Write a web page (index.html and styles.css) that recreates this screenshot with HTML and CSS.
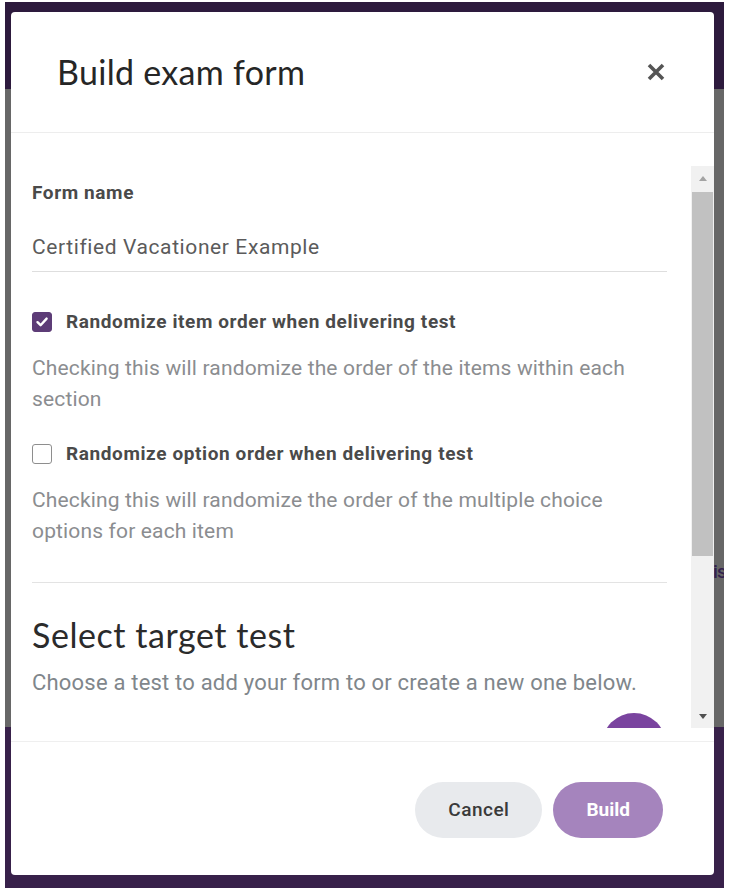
FILE: index.html
```html
<!DOCTYPE html>
<html lang="en">
<head>
<meta charset="utf-8">
<title>Build exam form</title>
<link rel="stylesheet" href="styles.css">
</head>
<body>
<div class="page">
  <div class="bg-top"></div>
  <div class="bg-mid"><span class="bg-word">is</span></div>
  <div class="bg-bottom"></div>

  <div class="modal">
    <header class="modal-header">
      <h1 class="modal-title">Build exam form</h1>
      <button class="close-btn" aria-label="Close">
        <svg width="20" height="20" viewBox="0 0 20 20"><path d="M3 3 L17 17 M17 3 L3 17" stroke="#555" stroke-width="3.6" stroke-linecap="butt" fill="none"/></svg>
      </button>
    </header>

    <div class="modal-body">
      <div class="scroll">
        <div class="scroll-content">
          <div class="field-label">Form name</div>
          <div class="text-input">Certified Vacationer Example</div>

          <div class="check-row">
            <span class="checkbox checked">
              <svg width="14" height="14" viewBox="0 0 14 14"><path d="M2.5 7.2 L5.6 10.2 L11.6 3.6" stroke="#fff" stroke-width="2.4" fill="none" stroke-linecap="round" stroke-linejoin="round"/></svg>
            </span>
            <span class="check-label">Randomize item order when delivering test</span>
          </div>
          <p class="help">Checking this will randomize the order of the items within each section</p>

          <div class="check-row second">
            <span class="checkbox"></span>
            <span class="check-label">Randomize option order when delivering test</span>
          </div>
          <p class="help">Checking this will randomize the order of the multiple choice options for each item</p>

          <hr class="divider">

          <h2 class="section-title">Select target test</h2>
          <p class="section-sub">Choose a test to add your form to or create a new one below.</p>
          <div class="fab-row"><span class="fab"></span></div>
        </div>
        <div class="scrollbar">
          <div class="sb-btn"><span class="tri-up"></span></div>
          <div class="sb-track"><div class="sb-thumb"></div></div>
          <div class="sb-btn"><span class="tri-down"></span></div>
        </div>
      </div>
    </div>

    <footer class="modal-footer">
      <button class="btn btn-cancel">Cancel</button>
      <button class="btn btn-build">Build</button>
    </footer>
  </div>
</div>
</body>
</html>
```

FILE: styles.css
```css
* { box-sizing: border-box; }
html, body { margin: 0; }
body {
  background: #ffffff;
  padding: 2px 5px 4px 5px;
  font-family: Roboto, "Noto Sans", "Liberation Sans", sans-serif;
}
.page {
  position: relative;
  width: 719px;
  height: 886px;
  display: flex;
  flex-direction: column;
  overflow: hidden;
}
.bg-top { height: 87px; background: #2d1a3d; }
.bg-mid {
  height: 638px;
  background: #676767;
  padding: 472px 0 0 708px;
}
.bg-word {
  display: block;
  font-size: 19px;
  font-weight: 500;
  line-height: 22px;
  letter-spacing: -0.8px;
  color: #33214e;
  white-space: nowrap;
}
.bg-bottom { flex: 1; background: #38214a; }

.modal {
  position: absolute;
  top: 10px;
  left: 6px;
  width: 703px;
  height: 863px;
  background: #fff;
  border-radius: 4px;
  display: flex;
  flex-direction: column;
  overflow: hidden;
}
.modal-header {
  height: 121px;
  flex: none;
  border-bottom: 1px solid #ededed;
  display: flex;
  align-items: center;
  justify-content: space-between;
  padding: 0 46px 0 46px;
}
.modal-title {
  margin: 0;
  font-family: Lato, "Open Sans", sans-serif;
  font-weight: 400;
  font-size: 34px;
  line-height: 40px;
  color: #262626;
  letter-spacing: 0.3px;
}
.close-btn {
  width: 24px;
  height: 24px;
  border: 0;
  padding: 0;
  background: transparent;
  display: flex;
  align-items: center;
  justify-content: center;
}

.modal-body {
  flex: 1;
  min-height: 0;
  padding: 33px 0 13px 0;
}
.scroll {
  height: 100%;
  display: flex;
}
.scroll-content {
  flex: 1;
  min-width: 0;
  overflow: hidden;
  padding: 15px 24px 0 21px;
}
.field-label {
  font-size: 19px;
  line-height: 24px;
  font-weight: 700;
  letter-spacing: 0.6px;
  color: #4a4a4a;
}
.text-input {
  padding: 28px 0 10px;
  font-size: 21px;
  line-height: 28px;
  letter-spacing: 0.6px;
  color: #5b5b5b;
  border-bottom: 1px solid #dedede;
}
.check-row {
  margin-top: 38px;
  display: flex;
  align-items: center;
  gap: 14px;
  height: 24px;
}
.check-row.second { margin-top: 27px; }
.checkbox {
  width: 20px;
  height: 20px;
  border-radius: 3px;
  border: 1.5px solid #8e8e8e;
  background: #fff;
  display: flex;
  align-items: center;
  justify-content: center;
  flex: none;
}
.checkbox.checked {
  background: #5d3c77;
  border-color: #5d3c77;
}
.check-label {
  font-size: 19px;
  font-weight: 700;
  color: #4a4a4a;
  line-height: 24px;
  letter-spacing: 0.6px;
}
.help {
  margin: 19px 0 0;
  font-size: 21px;
  line-height: 31px;
  letter-spacing: 0.15px;
  color: #8b8d90;
}
.divider {
  margin: 35px 0 0;
  border: 0;
  border-top: 1px solid #e3e3e3;
  height: 0;
}
.section-title {
  margin: 34px 0 0;
  font-family: Lato, "Open Sans", sans-serif;
  font-weight: 400;
  font-size: 34px;
  line-height: 36px;
  letter-spacing: 0.55px;
  color: #2b2b2b;
}
.section-sub {
  margin: 14px 0 0;
  font-size: 22px;
  line-height: 31px;
  letter-spacing: 0.2px;
  color: #80868b;
}
.fab-row {
  margin-top: 15px;
  display: flex;
  justify-content: flex-end;
}
.fab {
  width: 64px;
  height: 64px;
  border-radius: 50%;
  background: #7a449f;
  margin-right: 1px;
}

.scrollbar {
  width: 23px;
  flex: none;
  background: #f1f1f1;
  display: flex;
  flex-direction: column;
}
.sb-btn {
  height: 24px;
  display: flex;
  align-items: center;
  justify-content: center;
  flex: none;
}
.sb-track {
  flex: 1;
  padding: 2px 1px 0 1px;
}
.sb-thumb {
  height: 364px;
  background: #c1c1c1;
}
.tri-up {
  width: 0; height: 0;
  border-left: 4px solid transparent;
  border-right: 4px solid transparent;
  border-bottom: 5px solid #a3a3a3;
}
.tri-down {
  width: 0; height: 0;
  border-left: 4px solid transparent;
  border-right: 4px solid transparent;
  border-top: 5px solid #505050;
}

.modal-footer {
  height: 134px;
  flex: none;
  border-top: 1px solid #efefef;
  display: flex;
  justify-content: flex-end;
  align-items: center;
  gap: 11px;
  padding: 2px 51px 0 0;
}
.btn {
  height: 56px;
  border-radius: 28px;
  border: 0;
  padding: 0 33px;
  font-family: Roboto, "Noto Sans", sans-serif;
  font-size: 19px;
}
.btn-cancel {
  background: #e8eaed;
  color: #3a3a3a;
  font-weight: 500;
  letter-spacing: 0.5px;
}
.btn-build {
  background: #a584bd;
  color: #fff;
  font-weight: 700;
  letter-spacing: 0;
}
```
